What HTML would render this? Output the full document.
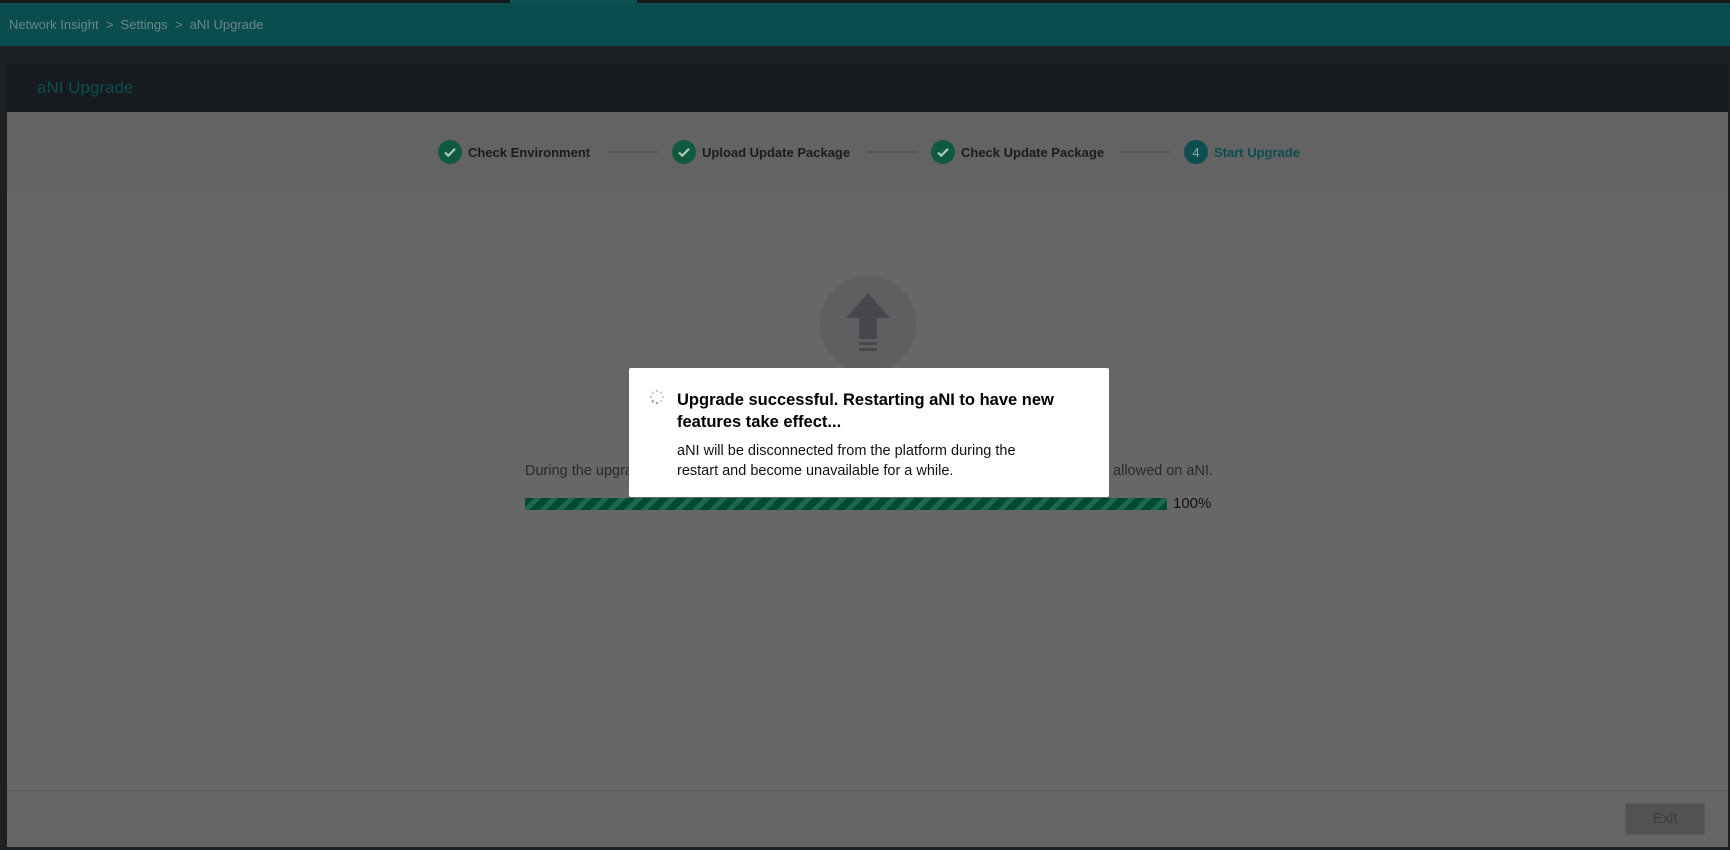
<!DOCTYPE html>
<html><head><meta charset="utf-8"><style>
*{margin:0;padding:0;box-sizing:border-box}
body{width:1730px;height:850px;background:#1e2124;position:relative;overflow:hidden;font-family:"Liberation Sans",sans-serif}
.a{position:absolute}
.step{position:absolute;top:140px;height:24px;display:flex;align-items:center;font-weight:bold;font-size:13px;color:#1c1c1c}
.c{width:24px;height:24px;border-radius:50%;background:#0f5a3e;margin-right:6px;display:flex;align-items:center;justify-content:center}
.ln{position:absolute;top:151px;height:2px;background:#555}
</style></head><body>
<div class="a" style="left:0;top:0;width:1730px;height:3px;background:#15191c"></div>
<div class="a" style="left:510px;top:0;width:127px;height:3px;background:#0d5254"></div>
<div class="a" style="left:0;top:3px;width:1730px;height:43px;background:#0a4d4f"></div>
<div class="a" style="left:9px;top:17px;font-size:13px;color:#6a8687">Network Insight &nbsp;&gt;&nbsp; Settings &nbsp;&gt;&nbsp; aNI Upgrade</div>
<div class="a" style="left:7px;top:63px;width:1721px;height:49px;background:#171b1f"></div>
<div class="a" style="left:37px;top:78px;font-size:17px;color:#0b4d50">aNI Upgrade</div>
<div class="a" style="left:7px;top:112px;width:1721px;height:80px;background:#636363"></div>
<div class="a" style="left:7px;top:192px;width:1721px;height:598px;background:#676767"></div>
<div class="a" style="left:7px;top:790px;width:1721px;height:57px;background:#666;border-top:1px solid #5e5e5e"></div>
<div class="a" style="left:0;top:847px;width:1730px;height:3px;background:#1e2124"></div>

<div class="step" style="left:438px"><div class="c"><svg width="14" height="14" viewBox="0 0 14 14"><path d="M2 7.5l3.2 3.2L12 3.8" stroke="#a9c8b8" stroke-width="2.2" fill="none"/></svg></div>Check Environment</div>
<div class="ln" style="left:607px;width:51px"></div>
<div class="step" style="left:672px"><div class="c"><svg width="14" height="14" viewBox="0 0 14 14"><path d="M2 7.5l3.2 3.2L12 3.8" stroke="#a9c8b8" stroke-width="2.2" fill="none"/></svg></div>Upload Update Package</div>
<div class="ln" style="left:867px;width:51px"></div>
<div class="step" style="left:931px"><div class="c"><svg width="14" height="14" viewBox="0 0 14 14"><path d="M2 7.5l3.2 3.2L12 3.8" stroke="#a9c8b8" stroke-width="2.2" fill="none"/></svg></div>Check Update Package</div>
<div class="ln" style="left:1120px;width:50px"></div>
<div class="step" style="left:1184px;color:#0b4d50"><div class="c" style="background:#0b4d50;color:#8aa;font-weight:normal;font-size:13px">4</div>Start Upgrade</div>

<div class="a" style="left:820px;top:276px;width:96px;height:96px;border-radius:50%;background:#5f5f62"></div>
<svg class="a" style="left:845px;top:290px" width="48" height="64" viewBox="0 0 48 64"><path d="M23 3L1 28h13v21h18V28h13z" fill="#47484c"/><rect x="14" y="52" width="18" height="3" fill="#47484c"/><rect x="14" y="58" width="18" height="3" fill="#47484c"/></svg>

<div class="a" style="left:525px;top:463px;font-size:14.5px;color:#2a2a2a">During the upgrade, do not</div>
<div class="a" style="left:1000px;top:463px;width:213px;text-align:right;font-size:14.5px;color:#2a2a2a">operations are allowed on aNI.</div>
<div class="a" style="left:525px;top:498px;width:642px;height:12px;background:repeating-linear-gradient(-45deg,#004a30 0 7px,#1b6a4c 7px 12px)"></div>
<div class="a" style="left:1173px;top:495px;font-size:15px;color:#111">100%</div>

<div class="a" style="left:629px;top:368px;width:480px;height:129px;background:#fff;border-radius:2px"></div>
<svg class="a" style="left:649px;top:389px" width="16" height="16" viewBox="0 0 16 16"><g fill="#ccc"><circle cx="8" cy="2" r="1.3"/><circle cx="12.2" cy="3.8" r="1.2"/><circle cx="14" cy="8" r="1.1"/><circle cx="12.2" cy="12.2" r="1.2"/><circle cx="8" cy="14" r="1.3" fill="#aaa"/><circle cx="3.8" cy="12.2" r="1.4" fill="#aaa"/><circle cx="2" cy="8" r="1.3"/><circle cx="3.8" cy="3.8" r="1.2"/></g></svg>
<div class="a" style="left:677px;top:389px;width:420px;font-size:16.5px;font-weight:bold;line-height:22px;color:#000">Upgrade successful. Restarting aNI to have new features take effect...</div>
<div class="a" style="left:677px;top:441px;width:420px;font-size:14.5px;line-height:20px;color:#111">aNI will be disconnected from the platform during the<br>restart and become unavailable for a while.</div>

<div class="a" style="left:1625px;top:803px;width:80px;height:32px;background:#525252;border:1px solid #5a5a5a;color:#3c3c3c;font-size:15px;text-align:center;line-height:30px">Exit</div>
</body></html>
